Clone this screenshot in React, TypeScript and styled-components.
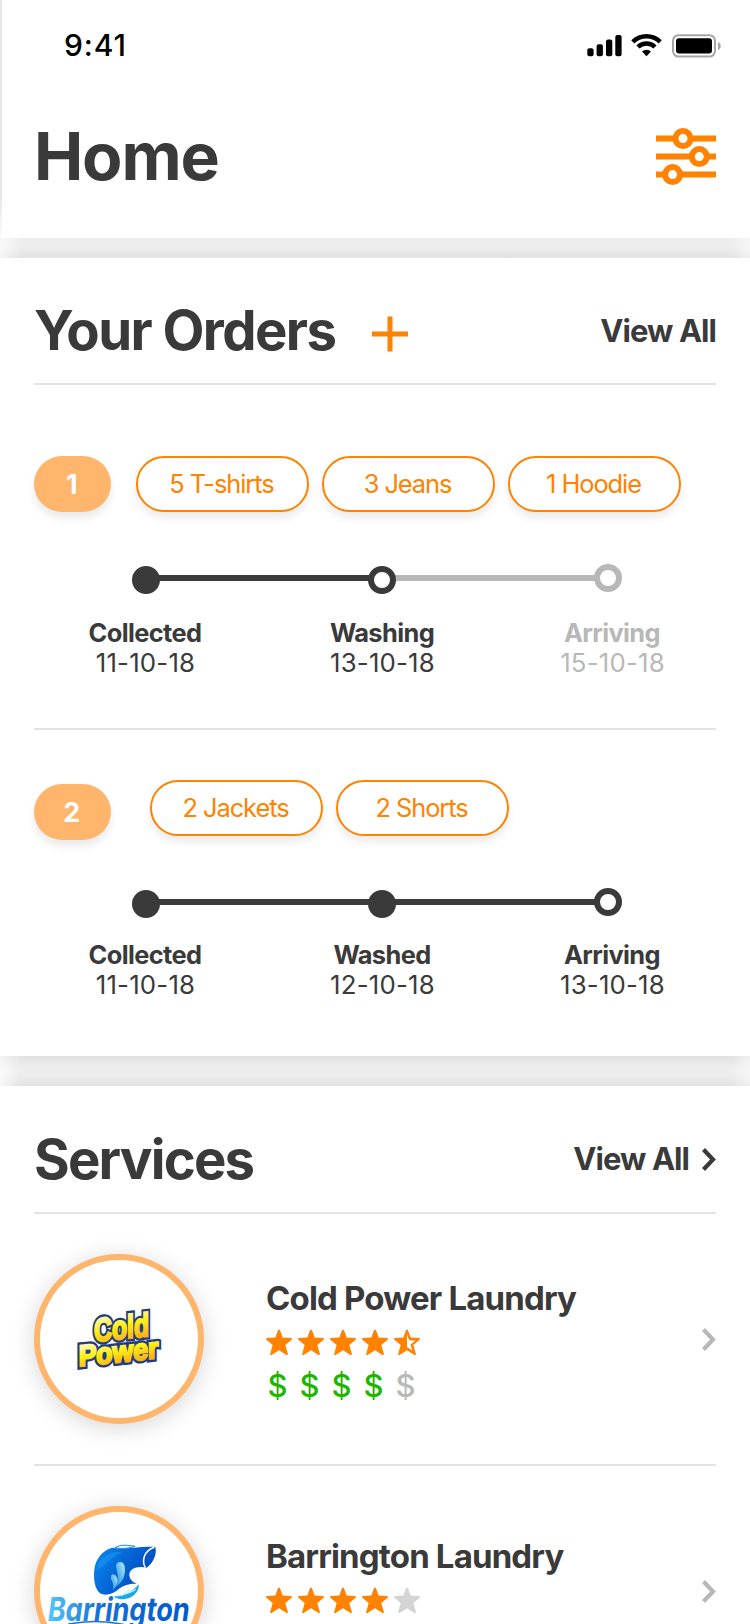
import React from "react";
import styled, { createGlobalStyle } from "styled-components";

const INK = "#3a3a3a";
const ORANGE = "#ff8200";
const PEACH = "#ffb56b";
const MUTED = "#b8b8b8";
const RULE = "#e2e3e3";

const GlobalStyle = createGlobalStyle`
  * { box-sizing: border-box; }
  body {
    margin: 0;
    background: #fff;
    color: ${INK};
    font-family: Inter, "Liberation Sans", sans-serif;
  }
  svg { display: block; flex: none; }
`;

const Screen = styled.main`
  width: 750px;
  height: 1624px;
  overflow: hidden;
  display: flex;
  flex-direction: column;
  background: #fff;
`;

const Header = styled.header`
  flex: none;
  height: 238px;
  border-left: 2px solid;
  border-image: linear-gradient(#e6e6e6 0, #e6e6e6 195px, #fafafa 234px) 1;
`;

const StatusBar = styled.div`
  height: 91px;
  padding: 0 29px 0 62px;
  display: flex;
  align-items: center;
  justify-content: space-between;
`;

const Clock = styled.time`
  padding-bottom: 1px;
  font-size: 30px;
  font-weight: 550;
  letter-spacing: 0.9px;
  line-height: 36px;
  color: #000;
`;

const StatusIcons = styled.div`
  display: flex;
  align-items: center;
`;

const TitleBar = styled.div`
  height: 130px;
  padding: 0 34px 0 32px;
  display: flex;
  align-items: center;
  justify-content: space-between;
`;

const FilterButton = styled.button`
  margin: 2px 0 0;
  padding: 0;
  border: 0;
  background: none;
`;

const PageTitle = styled.h1`
  margin: 0;
  font-size: 66px;
  line-height: 80px;
  font-weight: 700;
  letter-spacing: -1.2px;
`;

const Gap = styled.div<{ $size: number; $above?: boolean }>`
  flex: none;
  height: ${(p) => p.$size}px;
  background:
    linear-gradient(90deg, rgba(255, 255, 255, 0.65), rgba(255, 255, 255, 0) 22px calc(100% - 20px), rgba(255, 255, 255, 0.5)),
    linear-gradient(0deg, rgba(0, 0, 0, 0.045), rgba(0, 0, 0, 0) 11px),
    linear-gradient(180deg, rgba(0, 0, 0, ${(p) => (p.$above ? 0.05 : 0)}), rgba(0, 0, 0, 0) 11px),
    #ededed;
`;

const Section = styled.section`
  flex: none;
  padding: 0 34px;
`;

const SectionHeader = styled.div<{ $height: number }>`
  height: ${(p) => p.$height}px;
  padding-top: 20px;
  border-bottom: 2px solid ${RULE};
  display: flex;
  align-items: center;
`;

const SectionTitle = styled.h2<{ $lift: number; $tracking: number }>`
  margin: 0;
  padding-bottom: ${(p) => p.$lift}px;
  font-size: 54.5px;
  line-height: 66px;
  font-weight: 700;
  letter-spacing: ${(p) => p.$tracking}px;
`;

const AddButton = styled.button`
  margin: 6px 0 0 37px;
  padding: 0;
  border: 0;
  background: none;
`;

const ViewAll = styled.a`
  margin-left: auto;
  display: flex;
  align-items: center;
  gap: 13px;
  font-size: 31px;
  line-height: 38px;
  font-weight: 650;
  letter-spacing: -0.95px;
`;

const Order = styled.article<{ $top: number; $bottom: number }>`
  padding: ${(p) => p.$top}px 0 ${(p) => p.$bottom}px;
  & + & { border-top: 2px solid ${RULE}; }
`;

const ItemRow = styled.div`
  height: 56px;
  display: flex;
  align-items: flex-start;
`;

const OrderNumber = styled.span<{ $drop: number; $gap: number }>`
  width: 76.5px;
  height: 56px;
  margin: ${(p) => p.$drop}px ${(p) => p.$gap}px 0 0;
  padding-right: 1px;
  border-radius: 28px;
  display: flex;
  align-items: center;
  justify-content: center;
  background: ${PEACH};
  color: #fff;
  font-size: 27px;
  font-weight: 700;
  box-shadow: 0 6px 8px rgba(0, 0, 0, 0.09);
`;

const Pill = styled.span`
  width: 173px;
  height: 56.4px;
  margin-right: 13px;
  padding: 0 2px 2px 0;
  border: 2px solid ${ORANGE};
  border-radius: 29px;
  display: flex;
  align-items: center;
  justify-content: center;
  background: #fff;
  color: ${ORANGE};
  font-size: 25.4px;
  letter-spacing: -1.05px;
  box-shadow: 0 6px 8px rgba(0, 0, 0, 0.08);
`;

const Track = styled.div`
  height: 28px;
  margin: 52px 0 0 98px;
  display: flex;
  align-items: center;
`;

const Dot = styled.span<{ $filled?: boolean; $color: string; $shift: number }>`
  flex: none;
  z-index: 1;
  width: 28px;
  height: 28px;
  border: 6px solid ${(p) => p.$color};
  border-radius: 50%;
  background: ${(p) => (p.$filled ? p.$color : "#fff")};
  transform: translateY(${(p) => p.$shift}px);
`;

const Bar = styled.span<{ $length: number; $color: string }>`
  width: ${(p) => p.$length + 6}px;
  height: 6px;
  margin: 0 -3px;
  background: ${(p) => p.$color};
`;

const Labels = styled.div<{ $top: number }>`
  margin-top: ${(p) => p.$top}px;
  display: grid;
  grid-template-columns: 222px 252px 208px;
`;

const StepLabel = styled.div<{ $color: string }>`
  display: flex;
  flex-direction: column;
  align-items: center;
  font-size: 25.4px;
  line-height: 30px;
  color: ${(p) => p.$color};
`;

const StepName = styled.strong`
  font-weight: 650;
  letter-spacing: -0.6px;
`;

const StepDate = styled.span`
  padding-left: 1px;
  font-size: 25.8px;
  letter-spacing: 0.2px;
`;

const Service = styled.article`
  height: 252px;
  padding-top: 40px;
  border-bottom: 2px solid ${RULE};
  display: flex;
  align-items: flex-start;
`;

const Logo = styled.div`
  flex: none;
  width: 170px;
  height: 170px;
  border: 6px solid ${PEACH};
  border-radius: 50%;
  overflow: hidden;
  background: #fff;
  box-shadow: 0 4px 24px rgba(0, 0, 0, 0.16);
`;

const Info = styled.div<{ $top: number }>`
  flex: 1;
  margin: ${(p) => p.$top}px 0 0 62px;
`;

const ServiceName = styled.h3`
  margin: 0 0 11px;
  font-size: 33px;
  line-height: 40px;
  font-weight: 650;
  letter-spacing: -0.84px;
`;

const Rating = styled.div`
  height: 26px;
  display: flex;
  gap: 6px;
`;

const Prices = styled.div`
  margin-top: 17px;
  display: flex;
  gap: 8px;
`;

const Dollar = styled.span<{ $on: boolean }>`
  width: 24px;
  font-size: 31px;
  line-height: 28px;
  font-weight: 450;
  text-align: center;
  text-indent: -1px;
  color: ${(p) => (p.$on ? "#22b500" : MUTED)};
`;

const ChevronSlot = styled.div`
  height: 170px;
  display: flex;
  align-items: center;
`;

const Chevron = ({ color }: { color: string }) => (
  <svg width="14" height="23" viewBox="0 0 14 23">
    <path d="M1.5 1.5 11 11.5 1.5 21.5" fill="none" stroke={color} strokeWidth="4.2" />
  </svg>
);

const STAR =
  "M13 .6c.5 0 .9.3 1.1.8l2.6 7 8 .6c1.2.1 1.6 1.1.7 1.9l-6.1 5.2 2.5 8.7c.3 1.1-.5 1.7-1.4 1.1L13 21.2l-7.4 4.7c-.9.6-1.7 0-1.4-1.1l2.5-8.7L.6 10.9C-.3 10.1.1 9.1 1.3 9l8-.6 2.6-7c.2-.5.6-.8 1.1-.8z";

const Star = ({ kind }: { kind: "full" | "half" | "empty" }) => (
  <svg width="26" height="26" viewBox="0 0 26 26">
    <path d={STAR} fill={kind === "empty" ? "#d4d4d4" : ORANGE} />
    {kind === "half" && <path d="M13 5.5 15.2 11.2 21.5 11.8 16.5 15.5 18.2 21.6 13 18z" fill="#fff" />}
  </svg>
);

const Sliders = () => (
  <svg width="60" height="58" viewBox="0 0 60 58" fill="#fff" stroke={ORANGE} strokeWidth="6">
    <path d="M0 10.5H60M0 28.6H60M0 46.6H60" />
    <circle cx="27" cy="10.5" r="7.5" />
    <circle cx="43.3" cy="28.6" r="7.5" />
    <circle cx="16.6" cy="46.6" r="7.5" />
  </svg>
);

const StatusGlyphs = () => (
  <svg width="135" height="24" viewBox="0 0 135 24">
    <rect x="1.3" y="14.3" width="6.3" height="8" rx="2" />
    <rect x="10.6" y="10.3" width="6.3" height="12" rx="2" />
    <rect x="20" y="5.5" width="6.3" height="16.8" rx="2" />
    <rect x="29.3" y="1" width="6.3" height="21.3" rx="2" />
    <g fill="none" stroke="#000" strokeWidth="4.5">
      <path d="M46.8 7.9a19.5 19.5 0 0 1 27.4 0" />
      <path d="M52 13a12.2 12.2 0 0 1 17 0" />
    </g>
    <path d="M56 17.6a6.6 6.6 0 0 1 9 0L60.5 22.3z" />
    <rect x="87" y="1.2" width="42" height="21.4" rx="5.5" fill="none" stroke="#a6a6a6" strokeWidth="2" />
    <rect x="90" y="4.2" width="36" height="15.2" rx="3" />
    <path d="M132 8c3.7 1.5 3.7 6.5 0 8z" fill="#a6a6a6" />
  </svg>
);

const coldText = { fontFamily: '"Liberation Sans"', fontWeight: 700, lengthAdjust: "spacingAndGlyphs" as const };

const ColdPowerLogo = () => {
  const words = (
    <>
      <text x="0" y="0" fontSize="98" textLength="166" transform="translate(282 365) rotate(-6) skewX(-6)" {...coldText}>Cold</text>
      <text x="0" y="0" fontSize="88" textLength="240" transform="translate(236 439) rotate(-6) skewX(-6)" {...coldText}>Power</text>
    </>
  );
  return (
    <svg width="158" height="158" viewBox="120 120 474 474">
      <defs>
        <linearGradient id="gold" x1="0" y1="0" x2="0.2" y2="1">
          <stop offset="0.2" stopColor="#fffab0" />
          <stop offset="0.55" stopColor="#ffee10" />
          <stop offset="0.95" stopColor="#f9b018" />
        </linearGradient>
      </defs>
      <g fill="#213a80" stroke="#213a80" strokeWidth="21" strokeLinejoin="miter" strokeMiterlimit="3">{words}</g>
      <g fill="url(#gold)" stroke="url(#gold)" strokeWidth="7">{words}</g>
    </svg>
  );
};

const BarringtonLogo = () => (
  <svg width="158" height="158" viewBox="120 186 474 474">
    <defs>
      <linearGradient id="fish" x1="0" y1="0" x2="1" y2="0.5">
        <stop offset="0" stopColor="#0a8cf0" />
        <stop offset="0.5" stopColor="#0567d8" />
        <stop offset="1" stopColor="#0148b8" />
      </linearGradient>
      <linearGradient id="drop" x1="0" y1="1" x2="1" y2="0">
        <stop offset="0" stopColor="#0a7fe0" />
        <stop offset="1" stopColor="#b5f0ff" />
      </linearGradient>
      <linearGradient id="word" x1="0" y1="0" x2="1" y2="0">
        <stop offset="0" stopColor="#55c8ff" />
        <stop offset="0.35" stopColor="#1672d8" />
        <stop offset="1" stopColor="#0058d0" />
      </linearGradient>
    </defs>
    <path
      d="M338 293C370 301 425 286 466 291C471 310 463 336 440 353C412 346 388 356 388 374C389 391 402 399 416 402C388 399 369 406 352 421C336 434 314 438 300 430C283 416 280 385 283 358C287 326 309 299 338 293Z"
      fill="url(#fish)"
    />
    <path d="M345 293C362 282 387 286 405 289C390 294 366 298 345 293Z" fill="#fff" stroke="#1284e8" strokeWidth="3" />
    <path d="M290 360C315 352 330 323 365 307C335 302 293 325 290 360Z" fill="#1995f5" opacity=".6" />
    <path d="M463 292C430 303 425 334 436 353" fill="none" stroke="#fff" strokeWidth="4.500" />
    <path d="M343 411C368 402 378 375 374 349C371 333 349 331 348 349C349 366 362 379 343 411Z" fill="url(#drop)" />
    <path d="M338 421C355 406 356 387 346 376C337 370 329 377 334 389C338 397 342 407 338 421Z" fill="url(#drop)" />
    <path d="M342 441C360 431 384 440 416 403C421 431 379 462 342 441Z" fill="#18a7e8" />
    <path d="M350 438C372 433 391 431 407 418M364 437C378 430 381 420 391 418" fill="none" stroke="#c9f5ff" strokeWidth="4" />
    <text
      x="143"
      y="514"
      fontFamily="Inter"
      fontSize="96"
      fontWeight="700"
      fontStyle="italic"
      textLength="426"
      lengthAdjust="spacingAndGlyphs"
      fill="url(#word)"
    >
      Barrington
    </text>
    <path d="M205 522C260 512 320 512 372 524" fill="none" stroke="#1672d8" strokeWidth="5" />
  </svg>
);

type Step = { name: string; date: string; filled?: boolean; pending?: boolean };

const Timeline = ({ steps, labelTop }: { steps: Step[]; labelTop: number }) => {
  const tone = (s: Step) => (s.pending ? MUTED : INK);
  return (
    <>
      <Track>
        <Dot $filled={steps[0].filled} $color={tone(steps[0])} $shift={2} />
        <Bar $length={208} $color={tone(steps[1])} />
        <Dot $filled={steps[1].filled} $color={tone(steps[1])} $shift={2} />
        <Bar $length={198} $color={tone(steps[2])} />
        <Dot $filled={steps[2].filled} $color={tone(steps[2])} $shift={0} />
      </Track>
      <Labels $top={labelTop}>
        {steps.map((s) => (
          <StepLabel key={s.name} $color={tone(s)}>
            <StepName>{s.name}</StepName>
            <StepDate>{s.date}</StepDate>
          </StepLabel>
        ))}
      </Labels>
    </>
  );
};

export default function App() {
  return (
    <>
      <GlobalStyle />
      <Screen>
        <Header>
          <StatusBar>
            <Clock>9:41</Clock>
            <StatusIcons>
              <StatusGlyphs />
            </StatusIcons>
          </StatusBar>
          <TitleBar>
            <PageTitle>Home</PageTitle>
            <FilterButton aria-label="Filter">
              <Sliders />
            </FilterButton>
          </TitleBar>
        </Header>
        <Gap $size={20} />
        <Section>
          <SectionHeader $height={127}>
            <SectionTitle $lift={0.5} $tracking={-1.58}>Your Orders</SectionTitle>
            <AddButton aria-label="Add order">
              <svg width="36" height="36" viewBox="0 0 36 36">
                <path d="M18 .5V35.5M0 18H36" stroke={ORANGE} strokeWidth="5" />
              </svg>
            </AddButton>
            <ViewAll>View All</ViewAll>
          </SectionHeader>
          <Order $top={71} $bottom={50}>
            <ItemRow>
              <OrderNumber $drop={0} $gap={25.5}>1</OrderNumber>
              <Pill>5 T-shirts</Pill>
              <Pill>3 Jeans</Pill>
              <Pill>1 Hoodie</Pill>
            </ItemRow>
            <Timeline
              labelTop={26}
              steps={[
                { name: "Collected", date: "11-10-18", filled: true },
                { name: "Washing", date: "13-10-18" },
                { name: "Arriving", date: "15-10-18", pending: true },
              ]}
            />
          </Order>
          <Order $top={50} $bottom={56}>
            <ItemRow>
              <OrderNumber $drop={4} $gap={39.5}>2</OrderNumber>
              <Pill>2 Jackets</Pill>
              <Pill>2 Shorts</Pill>
            </ItemRow>
            <Timeline
              labelTop={24}
              steps={[
                { name: "Collected", date: "11-10-18", filled: true },
                { name: "Washed", date: "12-10-18", filled: true },
                { name: "Arriving", date: "13-10-18" },
              ]}
            />
          </Order>
        </Section>
        <Gap $size={30} $above />
        <Section>
          <SectionHeader $height={128}>
            <SectionTitle $lift={1} $tracking={-1.8}>Services</SectionTitle>
            <ViewAll>
              View All
              <Chevron color={INK} />
            </ViewAll>
          </SectionHeader>
          <Service>
            <Logo>
              <ColdPowerLogo />
            </Logo>
            <Info $top={24}>
              <ServiceName>Cold Power Laundry</ServiceName>
              <Rating>
                <Star kind="full" />
                <Star kind="full" />
                <Star kind="full" />
                <Star kind="full" />
                <Star kind="half" />
              </Rating>
              <Prices>
                {[1, 2, 3, 4, 5].map((n) => (
                  <Dollar key={n} $on={n < 5}>$</Dollar>
                ))}
              </Prices>
            </Info>
            <ChevronSlot>
              <Chevron color={MUTED} />
            </ChevronSlot>
          </Service>
          <Service>
            <Logo>
              <BarringtonLogo />
            </Logo>
            <Info $top={30}>
              <ServiceName>Barrington Laundry</ServiceName>
              <Rating>
                <Star kind="full" />
                <Star kind="full" />
                <Star kind="full" />
                <Star kind="full" />
                <Star kind="empty" />
              </Rating>
            </Info>
            <ChevronSlot>
              <Chevron color={MUTED} />
            </ChevronSlot>
          </Service>
        </Section>
      </Screen>
    </>
  );
}
